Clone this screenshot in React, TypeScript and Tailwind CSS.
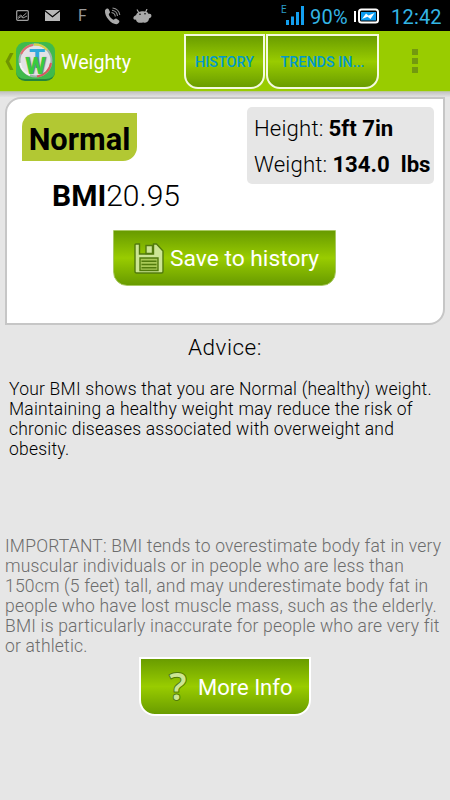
import type { ReactNode } from "react";
import clsx from "clsx";

const GREEN_GRADIENT = "bg-linear-to-b from-[#669900] via-[#99cc00] to-[#669900]";

const ADVICE = [
  "Your BMI shows that you are Normal (healthy) weight.",
  "Maintaining a healthy weight may reduce the risk of",
  "chronic diseases associated with overweight and",
  "obesity.",
];

const IMPORTANT = [
  "IMPORTANT: BMI tends to overestimate body fat in very",
  "muscular individuals or in people who are less than",
  "150cm (5 feet) tall, and may underestimate body fat in",
  "people who have lost muscle mass, such as the elderly.",
  "BMI is particularly inaccurate for people who are very fit",
  "or athletic.",
];

function StatusBar() {
  return (
    <div className="flex h-[31px] items-center bg-black text-[#33b5e5]">
      <svg className="ml-4 h-[11px] w-[13px]" viewBox="0 0 13 11" fill="none" stroke="#a0a0a0">
        <rect x="0.7" y="0.7" width="11.6" height="9.6" rx="1" strokeWidth="1.2" />
        <path d="M2 7.5L4.5 5L6.5 6.5L10.5 3M2 8.5L5 6.5L7 8L11 6" strokeWidth="1" />
      </svg>
      <svg className="ml-4 h-[11px] w-[15px]" viewBox="0 0 15 11" fill="#b8b8b8">
        <path d="M0 0H15L7.5 6Z" />
        <path d="M0 1.6L7.5 7.6L15 1.6V11H0Z" />
      </svg>
      <span className="ml-[18px] w-[10px] text-[16px] leading-none text-[#9a9a9a]">F</span>
      <svg className="ml-[16px] h-[18px] w-[17px]" viewBox="0 0 17 18">
        <path
          d="M1 3.5C2 1.5 4 1 4.7 2.2L6 5C6.2 6 4.8 6.5 4.8 7.5C5.2 9.4 7.4 12 9.3 12.7C10.2 13 11.3 11.3 12.2 11.6L15 13.5C16.2 14.8 14.3 17 12.5 17.2C7.5 17.5 0.3 9.5 1 3.5Z"
          fill="#aaaaaa"
        />
        <path d="M7.5 5.5Q11 6 11.3 9.5M8 3.3Q13 4 13.5 9M8.5 1Q15 2 15.8 8" fill="none" stroke="#909090" strokeWidth="1.1" />
      </svg>
      <svg className="ml-3 h-[14px] w-[19px]" viewBox="0 0 19 14">
        <path d="M4 0.5L6 4M14 0L12.5 3.5" stroke="#a8a8a8" strokeWidth="1.2" />
        <path
          d="M3.2 6C3.7 1.3 14.8 0.8 15.6 5C18.3 4 19.2 7 17.7 8.5L16 9.5C15.7 13.4 12.5 14 10 13.6C6 14.4 3.2 13.4 3 10.5C0.3 11.5 -0.3 8.5 1.2 7.2Z"
          fill="#a8a8a8"
        />
        <circle cx="7" cy="5.3" r="0.8" />
        <circle cx="12" cy="4.8" r="0.8" />
      </svg>

      <div className="ml-auto flex items-center">
        <span className="mb-[11px] w-[5px] text-[10px] leading-none text-[#2a9cc8]">E</span>
        <svg className="mr-[5px] h-[19px] w-[18px]" viewBox="0 0 18 19" fill="#14a0f0">
          <path d="M0 14h3v5h-3zM5 10.5h3v8.5h-3zM10 6h3v13h-3zM15 0h3v19h-3z" />
        </svg>
        <span className="w-[45px] pt-[2px] pl-[1px] text-[20px] leading-none tracking-[0.2px] whitespace-nowrap">90%</span>
        <svg className="h-[16px] w-[25px]" viewBox="0 0 25 16">
          <path d="M1 3V14" stroke="white" strokeWidth="2" />
          <rect x="5" y="1.5" width="19" height="13" rx="2.5" fill="black" stroke="white" strokeWidth="2" />
          <rect x="7" y="4" width="15" height="8.5" fill="#0c9cf0" />
          <path d="M8 11L12 5.5L14.5 7.5L20.5 5L16.5 11L13.5 8.8Z" fill="white" />
        </svg>
        <span className="ml-[12px] w-[59px] pt-[2px] text-[20px] leading-none tracking-[0.2px]">12:42</span>
      </div>
    </div>
  );
}

function Logo() {
  return (
    <div className="relative ml-[2px] h-[39px] w-[39px] overflow-hidden rounded-[9px] border-b-2 border-[#24863b] bg-[#3fba4c]">
      <svg className="h-[37px] w-[39px]" viewBox="0 0 39 37" fill="none">
        <circle cx="19.5" cy="18.5" r="16" fill="#e2e2e6" stroke="#9fb3aa" strokeWidth="2" />
        <path d="M5 12A16 16 0 0 1 17 3" stroke="#df6f72" strokeWidth="2" />
        <path d="M18 2.5A16 16 0 0 1 31 8" stroke="#d8d344" strokeWidth="2" />
        <path d="M35 21A16 16 0 0 1 21 34.5" stroke="#d85a5e" strokeWidth="2" />
        <path d="M4 21A16 16 0 0 0 14 33" stroke="#f4f4f4" strokeWidth="2" />
      </svg>
      <span className="absolute top-[4px] left-[13px] text-[26px] leading-none font-bold text-[#2fa8dc]">T</span>
      <span className="absolute top-[12px] left-[9px] text-[24px] leading-none font-bold text-[#38cc3e] [text-shadow:1px_0_1px_#777]">W</span>
    </div>
  );
}

function TabButton({ children, className }: { children: ReactNode; className?: string }) {
  return (
    <button
      type="button"
      className={clsx(
        "h-[55px] rounded-b-[14px] border-[2.5px] border-[#f4fae0] bg-origin-border pt-[2px] text-[14.4px] font-medium whitespace-nowrap text-[#0099cc]",
        GREEN_GRADIENT,
        className,
      )}
    >
      {children}
    </button>
  );
}

function AppBar() {
  return (
    <div className="flex h-[61px] border-b border-[#b9c99b] bg-[#99cc00]">
      <div className="flex w-[184px] items-center">
        <svg className="ml-[5px] h-[19px] w-[9px]" viewBox="0 0 9 19">
          <path d="M5 1H8.5L4.2 9.5L8.5 18H5L0.5 9.5Z" fill="#6f9500" />
        </svg>
        <Logo />
        <span className="ml-[6px] pt-[3px] text-[19.7px] text-white">Weighty</span>
      </div>
      <div className="flex gap-[1px] pt-[3px]">
        <TabButton className="w-[81px]">HISTORY</TabButton>
        <TabButton className="w-[113px]">TRENDS IN...</TabButton>
      </div>
      <div className="ml-[33px] flex flex-col gap-[3px] pt-[18px]">
        <i className="size-[6px] bg-[#73990f]" />
        <i className="size-[6px] bg-[#73990f]" />
        <i className="size-[6px] bg-[#73990f]" />
      </div>
    </div>
  );
}

function SaveIcon() {
  return (
    <svg className="h-[31px] w-[30px]" viewBox="0 0 30 31" fill="#cce594" stroke="#527b0c" strokeWidth="1.4">
      <path d="M2 1H5.5V11H19.5V1H22.5L29 8V28.5Q29 30 27.5 30H2.5Q1 30 1 28.5V2Q1 1 2 1Z" />
      <path d="M12 2.5H18.5V10.5H12Z" />
      <path d="M6 15H24V27.5H6Z" fill="#a9c957" />
      <path d="M7.5 18.2H22.5M7.5 21.5H22.5M7.5 24.8H22.5" strokeWidth="1.6" />
    </svg>
  );
}

function Measure({ label, value }: { label: string; value: string }) {
  return (
    <div className="flex h-[36px] items-center text-[22.2px] whitespace-pre">
      <span className="font-light tracking-[0.15px]">{label}</span>
      <span className="ml-[5px] font-bold">{value}</span>
    </div>
  );
}

export default function App() {
  return (
    <div className="h-[800px] w-[450px] overflow-hidden bg-[#e6e6e6] font-['Roboto',sans-serif] text-black">
      <StatusBar />
      <AppBar />
      <div className="h-[5px] bg-linear-to-b from-[#c4c4c4] to-[#e2e2e2]" />

      <div className="ml-[5px] flex h-[228px] w-[440px] flex-col rounded-tl-[16px] rounded-br-[16px] border-2 border-[#c6c6c6] bg-white">
        <div className="flex justify-between pr-[9px] pl-[15px]">
          <div className="mt-[14px] flex h-[48px] w-[115px] items-center justify-center rounded-tl-[14px] rounded-br-[14px] bg-[#b2c833] pt-[6px] text-[30.8px] font-bold">
            Normal
          </div>
          <div className="mt-[8px] h-[77px] w-[187px] rounded-[5px] bg-[#e6e6e6] pt-[4px] pl-[7px]">
            <Measure label="Height:" value="5ft 7in" />
            <Measure label="Weight:" value="134.0  lbs" />
          </div>
        </div>
        <div className="-mt-[6px] pl-[45px] text-[30px] leading-[36px]">
          <b>BMI</b>
          <span className="font-light">20.95</span>
        </div>
        <button
          type="button"
          className={clsx(
            "mt-[16px] ml-[106px] flex h-[56px] w-[223px] items-center rounded-b-[14px] border border-[#a9c963] bg-origin-border pl-[20px] text-[22.8px] text-white",
            GREEN_GRADIENT,
          )}
        >
          <SaveIcon />
          <span className="ml-[6px] pt-[2px] whitespace-nowrap">Save to history</span>
        </button>
      </div>

      <h2 className="mt-[8px] text-center text-[22.5px] leading-[28px] font-light tracking-[0.5px]">Advice:</h2>
      <div className="mt-[18px] h-[157px] pl-[9px] text-[17.5px] leading-[20px] font-light tracking-[0.22px] whitespace-nowrap">
        {ADVICE.map((line) => (
          <p key={line}>{line}</p>
        ))}
      </div>
      <div className="pl-[5px] text-[17.5px] leading-[20px] font-light tracking-[0.19px] whitespace-nowrap text-[#6c6c6c]">
        {IMPORTANT.map((line) => (
          <p key={line}>{line}</p>
        ))}
      </div>

      <button
        type="button"
        className={clsx(
          "mt-[1px] ml-[139px] flex h-[59px] w-[172px] items-center rounded-b-[16px] border-[2.5px] border-white bg-origin-border pl-[26px] text-[22px] text-white",
          GREEN_GRADIENT,
        )}
      >
        <span className="-mt-[3px] w-[22px] text-center font-['Open_Sans'] text-[38px] leading-none font-semibold text-[#cce594] [-webkit-text-stroke:2px_#527b0c] [paint-order:stroke_fill]">
          ?
        </span>
        <span className="ml-[9px] pt-[2px] whitespace-nowrap">More Info</span>
      </button>
    </div>
  );
}
